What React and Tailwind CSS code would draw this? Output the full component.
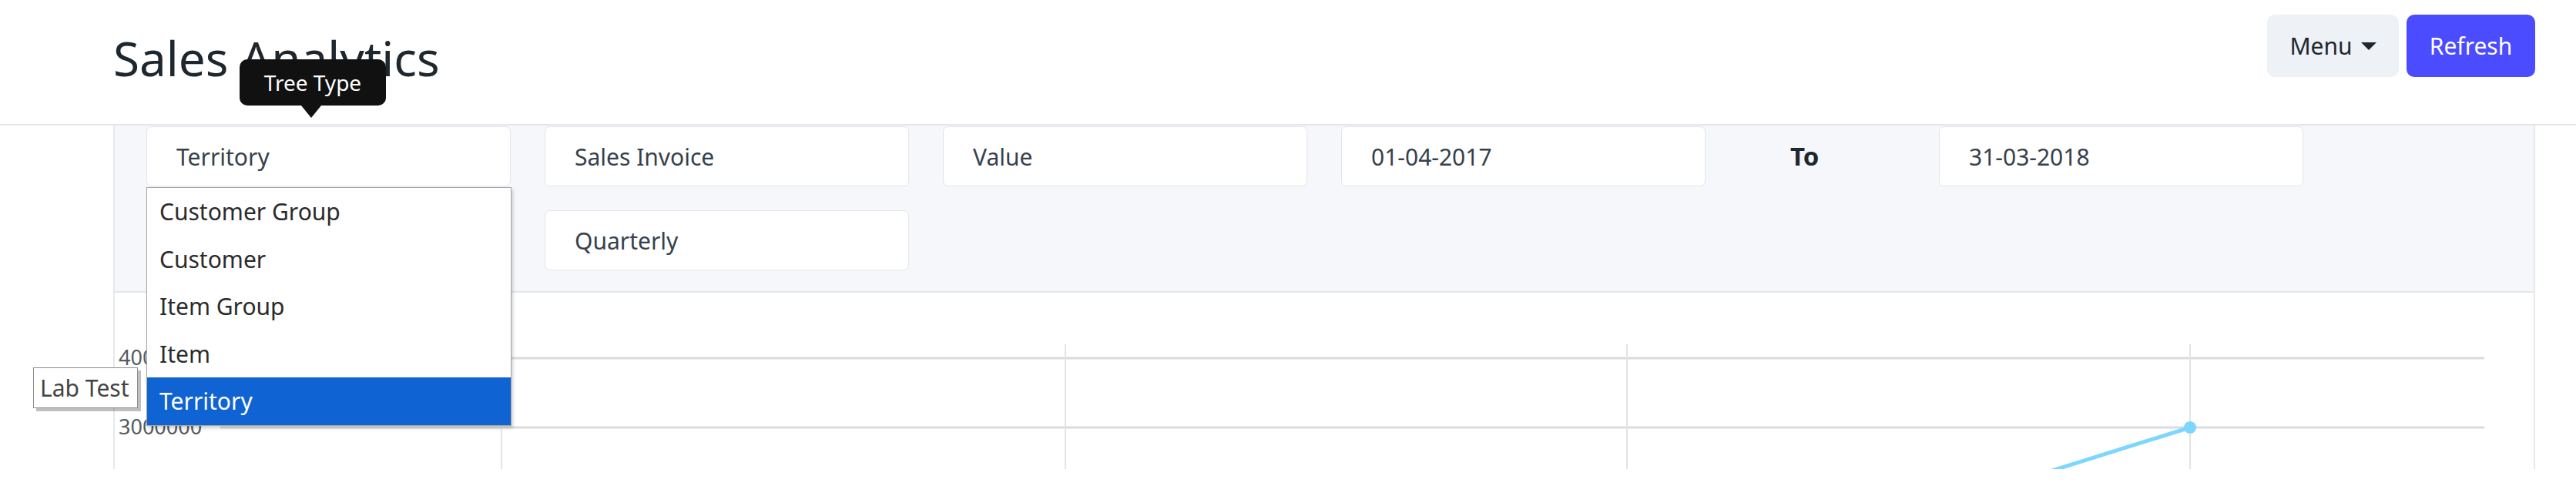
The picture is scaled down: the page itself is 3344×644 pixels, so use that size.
import React from 'react';

const Field = ({ value }) => (
  <div className="w-[473px] h-[78px] shrink-0 rounded-[7px] border border-[#e2e6ea] bg-white pl-[38px] flex items-center text-[30px] text-[#36414c]">
    {value}
  </div>
);

const options = ['Customer Group', 'Customer', 'Item Group', 'Item', 'Territory'];

const Chart = () => {
  const xs = [502, 1234, 1963, 2694];
  return (
    <svg width="3142" height="229" className="block">
      {[85, 175].map((y) => (
        <line key={y} x1="137" x2="3076" y1={y} y2={y} stroke="#d9dcdf" strokeWidth="3" />
      ))}
      {xs.map((x) => (
        <line key={x} x1={x} x2={x} y1="67" y2="229" stroke="#e1e3e5" strokeWidth="2" />
      ))}
      <text x="5" y="94" fontSize="27" fill="#555b61" fontFamily="Noto Sans, sans-serif">4000000</text>
      <text x="5" y="184" fontSize="27" fill="#555b61" fontFamily="Noto Sans, sans-serif">3000000</text>
      <line x1="2400" y1="267" x2="2694" y2="175" stroke="#7cd6fd" strokeWidth="5" />
      <circle cx="2694" cy="175" r="8" fill="#7cd6fd" />
    </svg>
  );
};

export default function App() {
  return (
    <div className="relative w-[3344px] h-[644px] overflow-hidden bg-white font-['Noto_Sans',sans-serif]">
      {/* Header */}
      <div className="h-[163px] border-b-2 border-[#e3e7ea] flex justify-between pl-[147px] pr-[53px]">
        <h1 className="pt-[44px] text-[62px] leading-none text-[#1f272e]">Sales Analytics</h1>
        <div className="flex gap-[10px] pt-[19px]">
          <button className="h-[81px] w-[171px] rounded-[10px] bg-[#eef1f5] flex items-center justify-center gap-[11px] text-[30px] text-[#1f272e]">
            Menu
            <span className="w-0 h-0 border-l-[10px] border-r-[10px] border-t-[10px] border-l-transparent border-r-transparent border-t-[#1f272e]" />
          </button>
          <button className="h-[81px] w-[167px] rounded-[10px] bg-[#4b4bff] text-[30px] text-white">
            Refresh
          </button>
        </div>
      </div>

      {/* Page body */}
      <div className="ml-[147px] w-[3144px] border-x-2 border-[#e6e9ec]">
        {/* Filters */}
        <div className="bg-[#f5f7fa] h-[217px] border-b-2 border-[#e3e7ea] pt-[1px] pl-[41px] flex flex-col gap-[31px]">
          <div className="flex gap-[44px]">
            <Field value="Territory" />
            <Field value="Sales Invoice" />
            <Field value="Value" />
            <Field value="01-04-2017" />
            <div className="w-[215px] h-[78px] shrink-0 pl-[66px] flex items-center text-[33px] font-bold text-[#1f272e]">
              To
            </div>
            <Field value="31-03-2018" />
          </div>
          <div className="flex gap-[44px]">
            <Field value="Weekly" />
            <Field value="Quarterly" />
          </div>
        </div>

        {/* Chart */}
        <div className="h-[229px] overflow-hidden">
          <Chart />
        </div>
      </div>

      {/* Tree Type tooltip */}
      <div className="absolute left-[311px] top-[77px] flex flex-col items-center">
        <div className="w-[190px] h-[60px] rounded-[10px] bg-[#111111] flex items-center justify-center text-[28px] text-white">
          Tree Type
        </div>
        <div className="w-0 h-0 -ml-[4px] border-l-[13px] border-r-[13px] border-t-[16px] border-l-transparent border-r-transparent border-t-[#111111]" />
      </div>

      {/* Native select dropdown */}
      <div className="absolute left-[190px] top-[243px] w-[474px] border border-[#a3a3a3] bg-white shadow-[2px_3px_4px_rgba(0,0,0,0.18)]">
        {options.map((opt) => (
          <div
            key={opt}
            className={`h-[61.5px] pl-[16px] flex items-center text-[30px] ${
              opt === 'Territory' ? 'bg-[#0f63d3] text-white' : 'text-[#2b2b2b]'
            }`}
          >
            {opt}
          </div>
        ))}
      </div>

      {/* Lab Test hover label */}
      <div className="absolute left-[43px] top-[477px] w-[136px] h-[53px] border border-[#8c8c8c] bg-white shadow-[4px_4px_0_rgba(0,0,0,0.25)] pl-[8px] flex items-center text-[30px] text-[#444]">
        Lab Test
      </div>
    </div>
  );
}
